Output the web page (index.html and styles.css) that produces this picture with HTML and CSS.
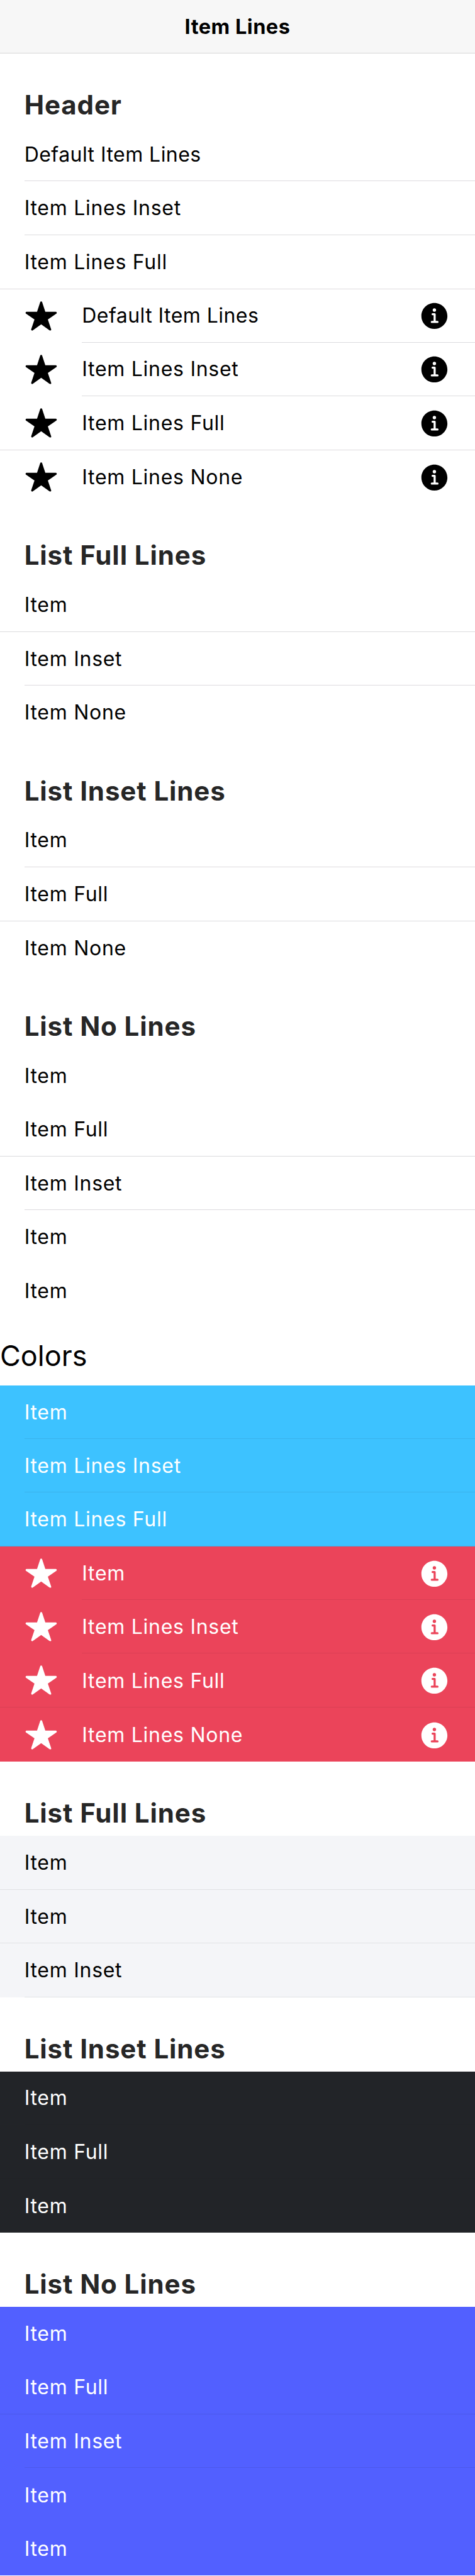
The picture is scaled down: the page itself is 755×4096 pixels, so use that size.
FILE: index.html
```html
<!DOCTYPE html>
<html lang="en">
<head>
<meta charset="utf-8">
<title>Item Lines</title>
<link rel="stylesheet" href="styles.css">
</head>
<body>
<svg class="defs" aria-hidden="true">
  <symbol id="star" viewBox="0 0 512 512"><path d="M394 480a16 16 0 01-9.39-3L256 383.76 127.39 477a16 16 0 01-24.55-18.08L153 310.35 23 221.2a16 16 0 019-29.2h160.38l48.4-148.95a16 16 0 0130.44 0l48.4 149H480a16 16 0 019.05 29.2L359 310.35l50.13 148.53A16 16 0 01394 480z"/></symbol>
  <symbol id="info" viewBox="0 0 512 512"><path d="M256 56C145.72 56 56 145.72 56 256s89.72 200 200 200 200-89.72 200-200S366.28 56 256 56zm0 82a26 26 0 11-26 26 26 26 0 0126-26zm48 226h-88a16 16 0 010-32h28v-88h-16a16 16 0 010-32h32a16 16 0 0116 16v104h28a16 16 0 010 32z"/></symbol>
</svg>

<header class="toolbar">Item Lines</header>

<main>
  <section class="list">
    <h3 class="list-header">Header</h3>
    <div class="item inset"><div class="inner tight">Default Item Lines</div></div>
    <div class="item inset"><div class="inner">Item Lines Inset</div></div>
    <div class="item full"><div class="inner">Item Lines Full</div></div>
    <div class="item inset"><svg class="icon start"><use href="#star"/></svg><div class="inner tight">Default Item Lines<svg class="icon end"><use href="#info"/></svg></div></div>
    <div class="item inset"><svg class="icon start"><use href="#star"/></svg><div class="inner">Item Lines Inset<svg class="icon end"><use href="#info"/></svg></div></div>
    <div class="item full"><svg class="icon start"><use href="#star"/></svg><div class="inner">Item Lines Full<svg class="icon end"><use href="#info"/></svg></div></div>
    <div class="item"><svg class="icon start"><use href="#star"/></svg><div class="inner">Item Lines None<svg class="icon end"><use href="#info"/></svg></div></div>
  </section>

  <section class="list">
    <h3 class="list-header">List Full Lines</h3>
    <div class="item full"><div class="inner">Item</div></div>
    <div class="item inset"><div class="inner">Item Inset</div></div>
    <div class="item"><div class="inner">Item None</div></div>
  </section>

  <section class="list">
    <h3 class="list-header">List Inset Lines</h3>
    <div class="item inset"><div class="inner">Item</div></div>
    <div class="item full"><div class="inner">Item Full</div></div>
    <div class="item"><div class="inner">Item None</div></div>
  </section>

  <section class="list">
    <h3 class="list-header">List No Lines</h3>
    <div class="item"><div class="inner">Item</div></div>
    <div class="item full"><div class="inner">Item Full</div></div>
    <div class="item inset"><div class="inner">Item Inset</div></div>
    <div class="item"><div class="inner">Item</div></div>
    <div class="item"><div class="inner">Item</div></div>
  </section>

  <h2 class="colors">Colors</h2>

  <div class="group secondary">
    <div class="item inset"><div class="inner">Item</div></div>
    <div class="item inset"><div class="inner">Item Lines Inset</div></div>
    <div class="item full"><div class="inner">Item Lines Full</div></div>
  </div>
  <div class="group danger">
    <div class="item inset"><svg class="icon start"><use href="#star"/></svg><div class="inner">Item<svg class="icon end"><use href="#info"/></svg></div></div>
    <div class="item inset"><svg class="icon start"><use href="#star"/></svg><div class="inner">Item Lines Inset<svg class="icon end"><use href="#info"/></svg></div></div>
    <div class="item full"><svg class="icon start"><use href="#star"/></svg><div class="inner">Item Lines Full<svg class="icon end"><use href="#info"/></svg></div></div>
    <div class="item"><svg class="icon start"><use href="#star"/></svg><div class="inner">Item Lines None<svg class="icon end"><use href="#info"/></svg></div></div>
  </div>

  <section class="list">
    <h3 class="list-header">List Full Lines</h3>
    <div class="group light">
      <div class="item full"><div class="inner">Item</div></div>
      <div class="item full"><div class="inner">Item</div></div>
      <div class="item inset"><div class="inner">Item Inset</div></div>
    </div>
  </section>

  <section class="list">
    <h3 class="list-header">List Inset Lines</h3>
    <div class="group dark">
      <div class="item inset"><div class="inner">Item</div></div>
      <div class="item full"><div class="inner">Item Full</div></div>
      <div class="item inset"><div class="inner">Item</div></div>
    </div>
  </section>

  <section class="list">
    <h3 class="list-header">List No Lines</h3>
    <div class="group primary">
      <div class="item"><div class="inner">Item</div></div>
      <div class="item full"><div class="inner">Item Full</div></div>
      <div class="item inset"><div class="inner">Item Inset</div></div>
      <div class="item"><div class="inner">Item</div></div>
      <div class="item"><div class="inner">Item</div></div>
    </div>
  </section>
</main>
</body>
</html>
```
FILE: styles.css
```css
* {
  box-sizing: border-box;
}

body {
  --line: #dcdbde;
  margin: 0;
  background: #fff;
  color: #000;
  font-family: Inter, "Liberation Sans", sans-serif;
  font-size: 32px;
  line-height: 1.21;
}

.defs {
  display: none;
}

.toolbar {
  display: flex;
  align-items: center;
  justify-content: center;
  height: 85.2px;
  padding-top: 2px;
  border-bottom: 1px solid #d6d6d6;
  background: #f7f7f7;
  font-size: 32.5px;
  font-weight: 700;
  letter-spacing: 0.5px;
}

.list-header {
  display: flex;
  align-items: center;
  height: 118.1px;
  margin: 0;
  padding: 47px 0 0 38.7px;
  color: #262626;
  font-size: 42px;
  font-weight: 700;
  letter-spacing: 0.9px;
}

.item {
  display: flex;
  align-items: center;
  height: 85.2px;
  padding-left: 38.7px;
}

.inner {
  display: flex;
  flex: 1;
  align-items: center;
  justify-content: space-between;
  align-self: stretch;
  padding: 2px 38.2px 0 0;
  letter-spacing: 0.72px;
}

.tight {
  letter-spacing: 0.45px;
}

.inset .inner {
  border-bottom: 1px solid var(--line);
}

.full {
  height: 85.9px;
  border-bottom: 1px solid var(--line);
}

.icon {
  flex: none;
  width: 52.9px;
  height: 52.9px;
  fill: currentColor;
}

.start {
  margin-right: 38.7px;
}

.colors {
  display: flex;
  align-items: center;
  height: 108.4px;
  margin: 0;
  padding-top: 14.5px;
  font-size: 45px;
  font-weight: 400;
}

.secondary {
  --line: #3ab3ec;
  background: #3dc2ff;
  color: #fff;
}

.danger {
  --line: #da3f54;
  background: #eb445a;
  color: #fff;
}

.light {
  --line: #e1e2e5;
  background: #f4f5f8;
}

.dark {
  --line: #202226;
  background: #222428;
  color: #fff;
}

.primary {
  --line: #4c59ec;
  background: #5260ff;
  color: #fff;
}
```
